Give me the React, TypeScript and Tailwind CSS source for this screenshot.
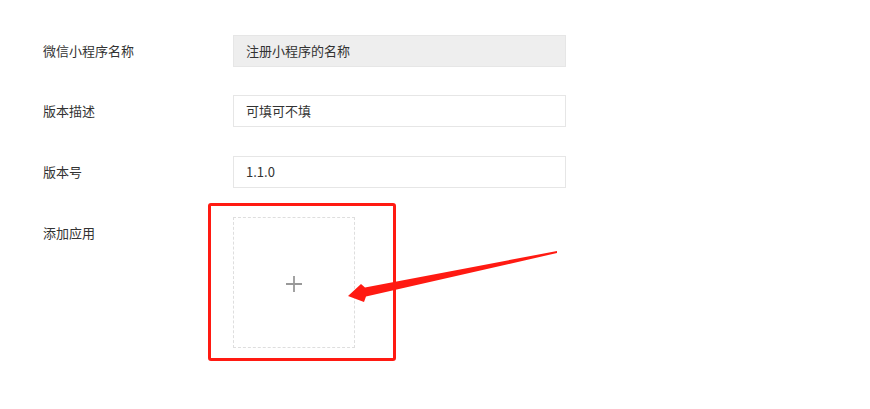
import React from "react";

const rows = [
  { label: "微信小程序名称", value: "注册小程序的名称", disabled: true },
  { label: "版本描述", value: "可填可不填", disabled: false },
  { label: "版本号", value: "1.1.0", disabled: false },
];

const font = { fontFamily: '"Noto Sans CJK SC", "Noto Sans", sans-serif' };

export default function App() {
  return (
    <div className="relative w-[870px] h-[409px] bg-white overflow-hidden" style={font}>
      <div className="flex flex-col pl-[43px] pt-[35px]">
        {rows.map((r, i) => (
          <div key={i} className={`flex items-center ${i === 0 ? "mb-[28px]" : "mb-[29px]"}`}>
            <div className="w-[190px] text-[13px] text-[#333]">{r.label}</div>
            <div
              className={`w-[333px] h-[32px] flex items-center px-[12px] border border-[#e6e6e6] text-[13px] text-[#333] ${
                r.disabled ? "bg-[#eeeeee]" : "bg-white"
              }`}
            >
              {r.value}
            </div>
          </div>
        ))}

        {/* upload */}
        <div className="flex items-start">
          <div className="w-[190px] h-[32px] flex items-center text-[13px] text-[#333]">添加应用</div>
          <div className="w-[122px] h-[131px] border border-dashed border-[#dedede] flex items-center justify-center">
            <svg width="18" height="18" viewBox="0 0 18 18" className="-ml-[1px] mt-[3px]">
              <path d="M1 9h16M9 1v16" stroke="#999" strokeWidth="1.8" fill="none" />
            </svg>
          </div>
        </div>
      </div>

      {/* annotation: red frame */}
      <div className="absolute left-[208px] top-[203px] w-[188px] h-[158px] border-[3px] border-[#ff1a12] rounded-[3px]" />

      {/* annotation: arrow */}
      <svg className="absolute left-0 top-0" width="870" height="409" viewBox="0 0 870 409">
        <polygon
          points="557,251 365,287.5 361,284 348,296 364,302 366,296.5 557,253"
          fill="#ff1a12"
        />
      </svg>
    </div>
  );
}
